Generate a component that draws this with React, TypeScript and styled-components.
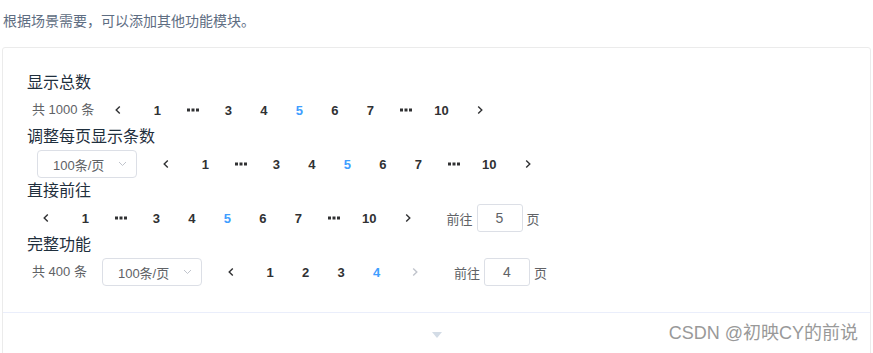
import React from 'react';
import styled, { createGlobalStyle } from 'styled-components';

const GlobalStyle = createGlobalStyle`
	body {
		margin: 0;
		background: #fff;
		font-family: "Liberation Sans", "Noto Sans CJK SC", sans-serif;
		overflow: hidden;
	}
`;

const Page = styled.div`
	padding: 0 2px;
`;

const Intro = styled.p`
	margin: 10px 0 15px;
	padding-left: 1px;
	font-size: 14px;
	line-height: 22px;
	color: #5e6d82;
`;

const Card = styled.div`
	border: 1px solid #ebebeb;
	border-radius: 3px;
`;

const Source = styled.div`
	padding: 24px;
`;

const Title = styled.div`
	font-size: 16px;
	line-height: 22px;
	color: #1f2f3d;
`;

const Pagination = styled.div`
	display: flex;
	align-items: center;
	height: 28px;
	padding: 2px 5px;
	color: #303133;
	font-size: 13px;
	white-space: nowrap;
`;

const Total = styled.span`
	margin-right: 10px;
	line-height: 28px;
	color: #606266;
`;

const SizeSelect = styled.div`
	box-sizing: border-box;
	display: flex;
	align-items: center;
	justify-content: space-between;
	width: 100px;
	height: 28px;
	margin: 0 15px 0 5px;
	padding: 0 9px 0 15px;
	border: 1px solid #dcdfe6;
	border-radius: 4px;
	color: #606266;
`;

const ArrowBtn = styled.button<{ $next?: boolean; $disabled?: boolean }>`
	box-sizing: border-box;
	display: flex;
	align-items: center;
	justify-content: center;
	width: 35.5px;
	height: 28px;
	padding: ${(p) => (p.$next ? '0 0 0 6.5px' : '0 7px 0 0')};
	border: none;
	background: none;
	color: ${(p) => (p.$disabled ? '#c0c4cc' : '#303133')};
`;

const Pager = styled.ul`
	display: flex;
	margin: 0;
	padding: 0;
	list-style: none;
`;

const PageItem = styled.li<{ $active?: boolean }>`
	display: flex;
	align-items: center;
	justify-content: center;
	min-width: 35.5px;
	height: 28px;
	font-weight: 700;
	color: ${(p) => (p.$active ? '#409eff' : '#303133')};
`;

const Jump = styled.span`
	display: flex;
	align-items: center;
	margin-left: 24px;
	color: #606266;
`;

const JumpInput = styled.span`
	box-sizing: border-box;
	display: flex;
	align-items: center;
	justify-content: center;
	width: 46px;
	height: 28px;
	margin: 0 4px;
	border: 1px solid #dcdfe6;
	border-radius: 3px;
	font-size: 14px;
`;

const Control = styled.div`
	position: relative;
	display: flex;
	align-items: center;
	justify-content: center;
	height: 44px;
	border-top: 1px solid #eaeefb;
`;

const Watermark = styled.div`
	position: absolute;
	top: 0;
	right: 12px;
	line-height: 40px;
	font-size: 18px;
	color: #999;
	text-shadow: 0 0 1px #fff;
`;

const Chevron = ({ next }: { next?: boolean }) => (
	<svg width="8" height="10" viewBox="0 0 8 10">
		<polyline
			points={next ? '2.2,1.5 5.8,5 2.2,8.5' : '5.8,1.5 2.2,5 5.8,8.5'}
			fill="none"
			stroke="currentColor"
			strokeWidth="1.4"
		/>
	</svg>
);

const More = () => (
	<svg width="12" height="4" viewBox="0 0 12 4">
		<rect x="0" y="0.5" width="3" height="3" fill="currentColor" />
		<rect x="4.5" y="0.5" width="3" height="3" fill="currentColor" />
		<rect x="9" y="0.5" width="3" height="3" fill="currentColor" />
	</svg>
);

const SelectArrow = () => (
	<svg width="9" height="6" viewBox="0 0 9 6">
		<polyline points="1,1 4.5,4.5 8,1" fill="none" stroke="#c0c4cc" strokeWidth="1" />
	</svg>
);

type PagerProps = {
	pages: (number | string)[];
	current: number;
	nextDisabled?: boolean;
};

const Pages = ({ pages, current, nextDisabled }: PagerProps) => (
	<>
		<ArrowBtn>
			<Chevron />
		</ArrowBtn>
		<Pager>
			{pages.map((p, i) => (
				<PageItem key={i} $active={p === current}>
					{p === '...' ? <More /> : p}
				</PageItem>
			))}
		</Pager>
		<ArrowBtn $next $disabled={nextDisabled}>
			<Chevron next />
		</ArrowBtn>
	</>
);

const tenPages = [1, '...', 3, 4, 5, 6, 7, '...', 10];

const Sizes = () => (
	<SizeSelect>
		<span>100条/页</span>
		<SelectArrow />
	</SizeSelect>
);

const JumpTo = ({ page }: { page: number }) => (
	<Jump>
		前往
		<JumpInput>{page}</JumpInput>
		页
	</Jump>
);

const App = () => {
	return (
		<Page>
			<GlobalStyle />
			<Intro>根据场景需要，可以添加其他功能模块。</Intro>
			<Card>
				<Source>
					<Title>显示总数</Title>
					<Pagination>
						<Total>共 1000 条</Total>
						<Pages pages={tenPages} current={5} />
					</Pagination>

					<Title>调整每页显示条数</Title>
					<Pagination>
						<Sizes />
						<Pages pages={tenPages} current={5} />
					</Pagination>

					<Title>直接前往</Title>
					<Pagination>
						<Pages pages={tenPages} current={5} />
						<JumpTo page={5} />
					</Pagination>

					<Title>完整功能</Title>
					<Pagination>
						<Total>共 400 条</Total>
						<Sizes />
						<Pages pages={[1, 2, 3, 4]} current={4} nextDisabled />
						<JumpTo page={4} />
					</Pagination>
				</Source>
				<Control>
					<svg width="10" height="6" viewBox="0 0 10 6">
						<polygon points="0,0 10,0 5,6" fill="#d3dce6" />
					</svg>
					<Watermark>CSDN @初映CY的前说</Watermark>
				</Control>
			</Card>
		</Page>
	);
};

export default App;
